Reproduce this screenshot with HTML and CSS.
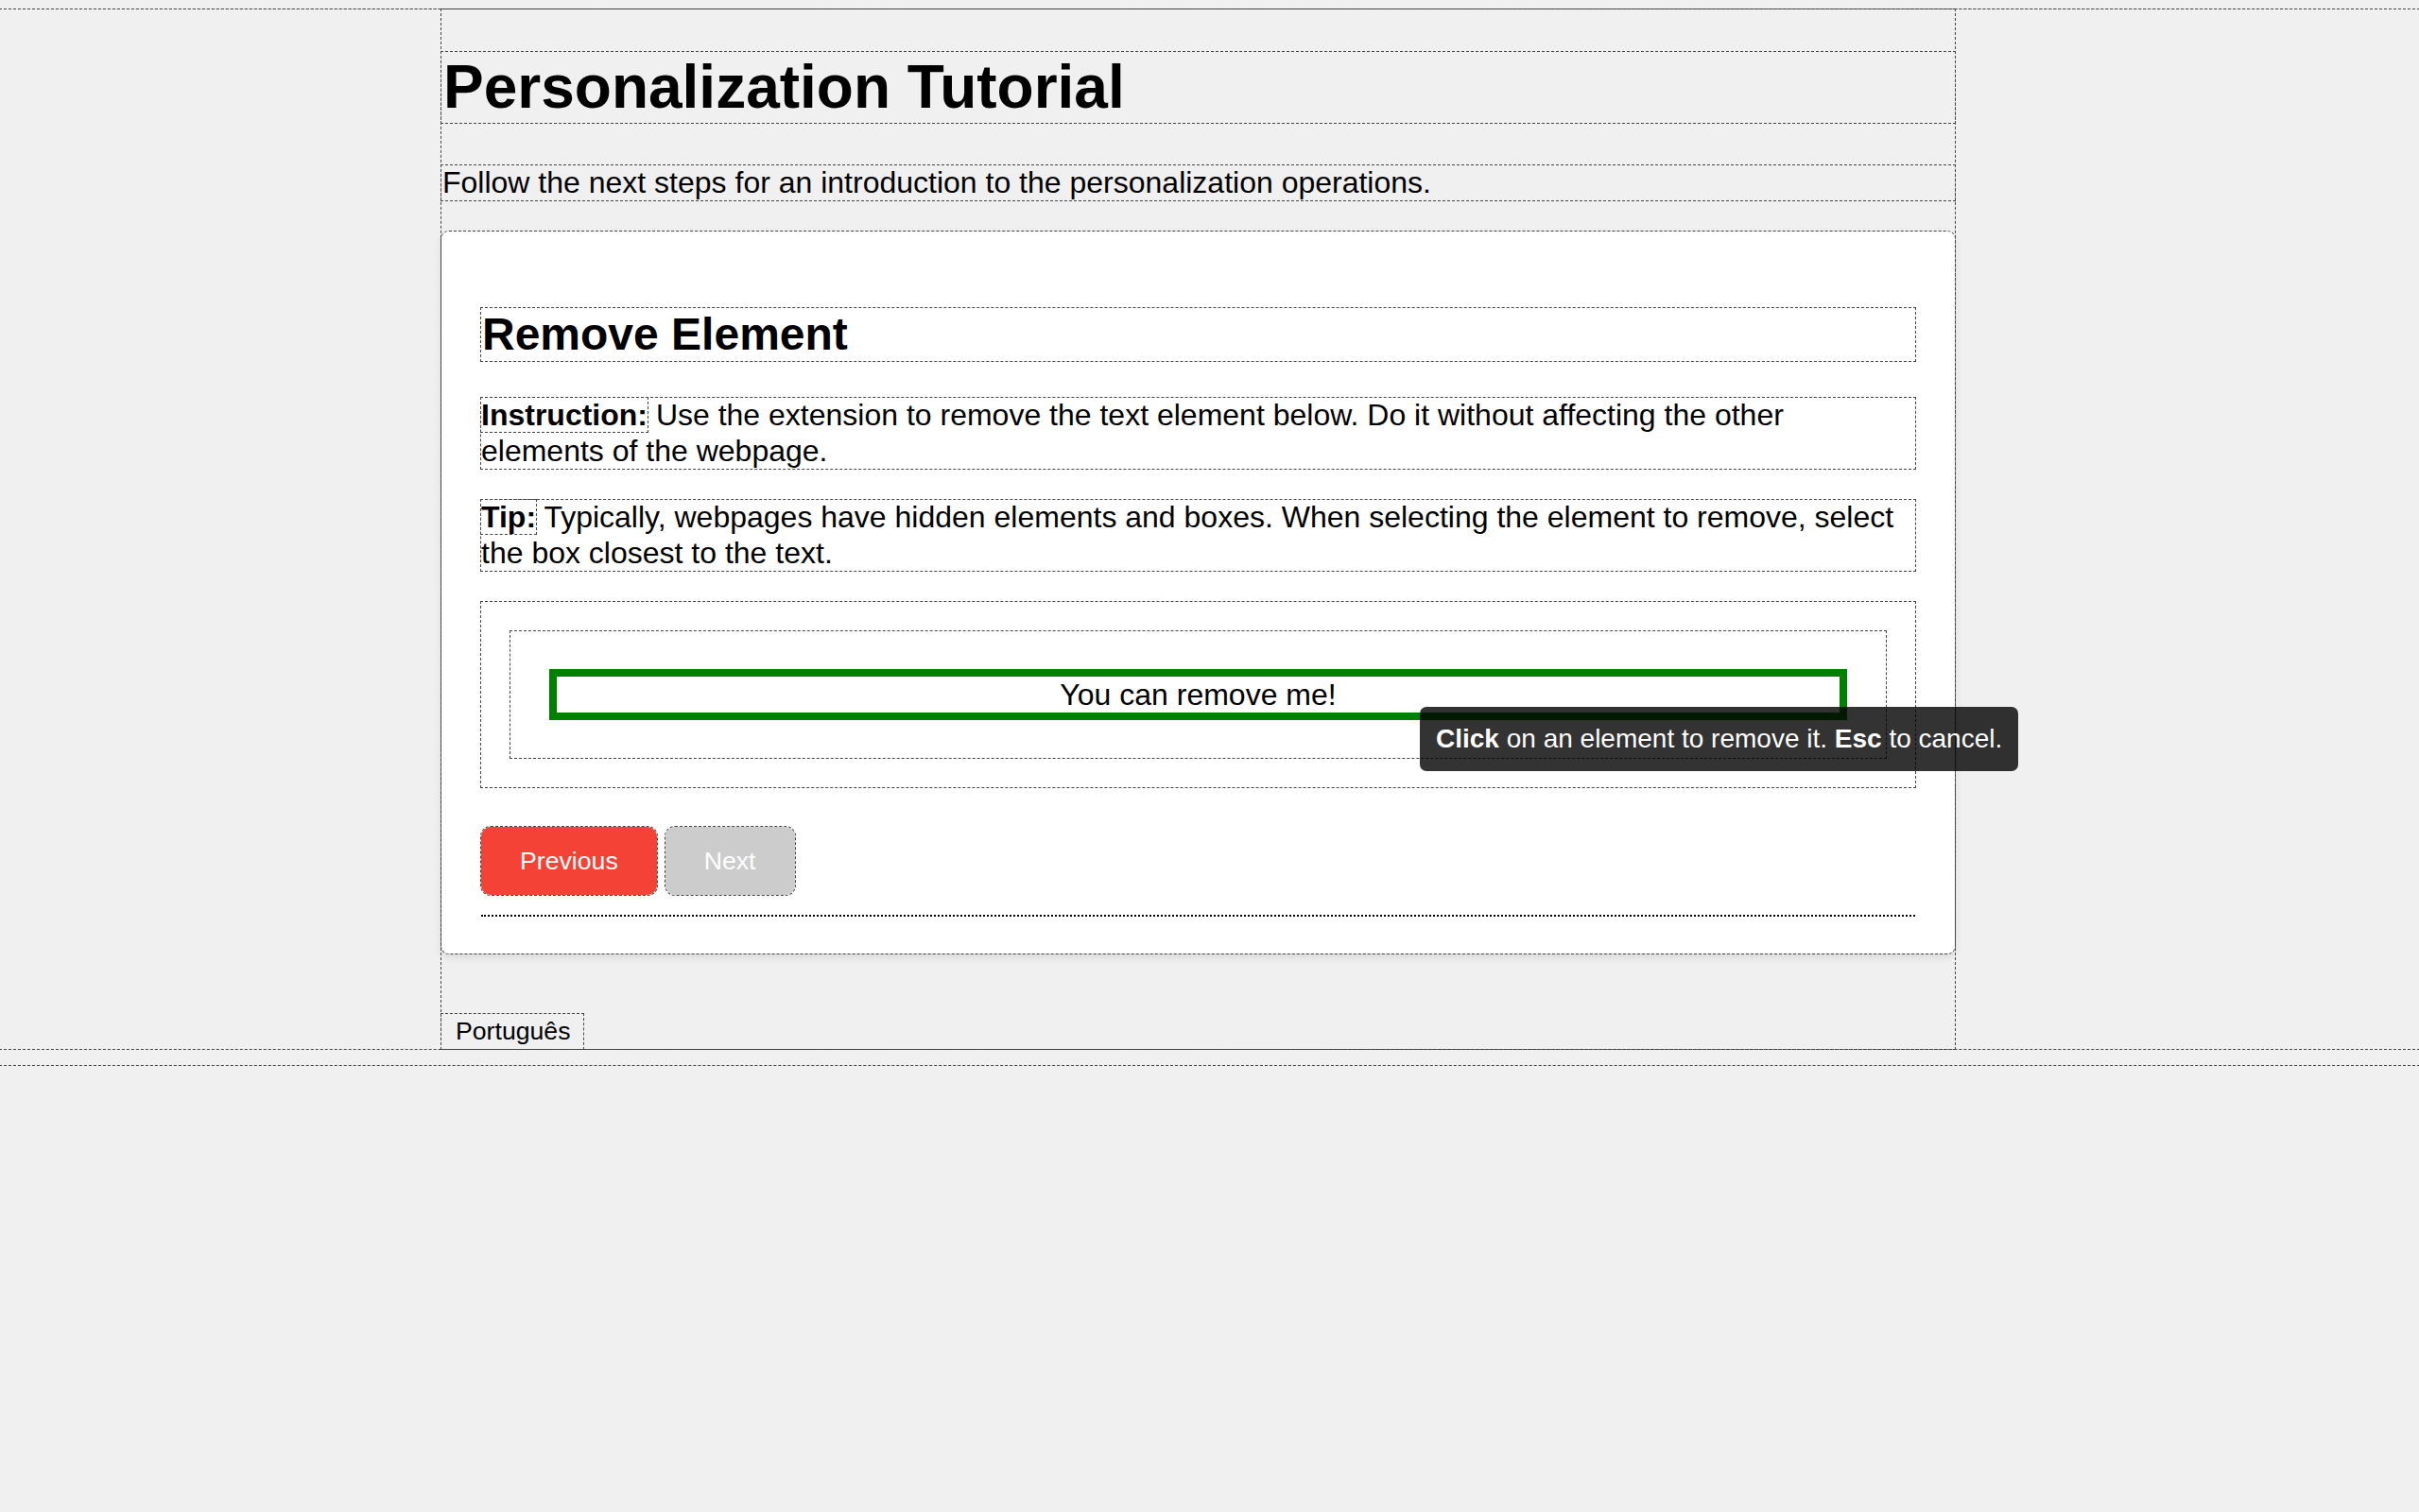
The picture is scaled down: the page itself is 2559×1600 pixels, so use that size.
FILE: index.html
```html
<!DOCTYPE html>
<html lang="en">
<head>
<meta charset="utf-8">
<title>Personalization Tutorial</title>
<link rel="stylesheet" href="styles.css">
</head>
<body>
<div class="root dbg">
  <div class="page dbg">
    <div class="container dbg">
      <h1 class="title dbg">Personalization Tutorial</h1>
      <p class="subtitle dbg">Follow the next steps for an introduction to the personalization operations.</p>
      <div class="card dbg">
        <h2 class="step-title dbg">Remove Element</h2>
        <p class="instruction dbg"><span class="label dbg">Instruction:</span> Use the extension to remove the text element below. Do it without affecting the other elements of the webpage.</p>
        <p class="tip dbg"><span class="label dbg">Tip:</span> Typically, webpages have hidden elements and boxes. When selecting the element to remove, select the box closest to the text.</p>
        <div class="outer-box dbg">
          <div class="inner-box dbg">
            <div class="target">You can remove me!</div>
          </div>
        </div>
        <div class="actions">
          <button class="btn btn-prev dbg">Previous</button>
          <button class="btn btn-next dbg">Next</button>
        </div>
        <hr class="divider">
      </div>
      <button class="lang dbg">Português</button>
    </div>
  </div>
</div>
<div class="tooltip"><b>Click</b> on an element to remove it. <b class="key">Esc</b> to cancel.</div>
</body>
</html>
```

FILE: styles.css
```css
html, body {
  margin: 0;
  padding: 0;
  background: #f0f0f0;
}

body {
  font-family: "Liberation Sans", Arial, Helvetica, sans-serif;
  font-size: 32px;
  color: #000;
  position: relative;
  min-height: 1600px;
}

.dbg {
  outline: 1px dashed #444;
}

.root {
  padding-bottom: 17px;
}

.page {
  margin-top: 10px;
}

.container {
  margin-left: 467px;
  width: 1601px;
  display: flex;
  flex-direction: column;
  align-items: flex-start;
}

.title {
  align-self: stretch;
  margin: 45px 0 0;
  padding-left: 2px;
  font-size: 64px;
  line-height: 75px;
  font-weight: bold;
}

.subtitle {
  align-self: stretch;
  margin: 45px 0 0;
  padding-left: 1px;
  line-height: 37px;
}

.card {
  align-self: stretch;
  margin-top: 33px;
  background: #fff;
  border-radius: 8px;
  box-shadow: 0 4px 10px rgba(0, 0, 0, 0.1);
  padding: 1px 42px 39px;
  display: flex;
  flex-direction: column;
}

.step-title {
  margin: 80px 0 0;
  padding-left: 1px;
  font-size: 48px;
  line-height: 56px;
  font-weight: bold;
}

.instruction,
.tip {
  margin: 39px 0 0;
  line-height: 37.5px;
}

.instruction {
  padding-right: 24px;
}

.tip {
  margin-top: 33px;
}

.label {
  font-weight: bold;
}

.outer-box {
  margin-top: 33px;
  padding: 31px;
}

.inner-box {
  padding: 40px 41px;
}

.target {
  border: 8px solid #008000;
  text-align: center;
  line-height: 38px;
}

.actions {
  margin-top: 42px;
  display: flex;
  gap: 9px;
}

.btn {
  font-family: "Liberation Sans", Arial, Helvetica, sans-serif;
  font-size: 26.67px;
  line-height: 32px;
  padding: 20px 41px;
  border: none;
  border-radius: 10px;
  color: #fff;
}

.btn-prev {
  background: #f44336;
}

.btn-next {
  background: #cccccc;
}

.divider {
  margin: 21px 0 0;
  border: none;
  border-top: 2px dotted #000;
  height: 0;
}

.lang {
  margin-top: 64px;
  font-family: "Liberation Sans", Arial, Helvetica, sans-serif;
  font-size: 26.67px;
  line-height: 31px;
  padding: 3px 13px 3px 15px;
  background: transparent;
  border: none;
  color: #000;
}

.tooltip {
  position: absolute;
  left: 1502px;
  top: 748px;
  padding: 18px 17px;
  font-size: 28px;
  line-height: 32px;
  color: #fff;
  background: rgba(0, 0, 0, 0.8);
  border-radius: 7px;
  white-space: nowrap;
}
```
